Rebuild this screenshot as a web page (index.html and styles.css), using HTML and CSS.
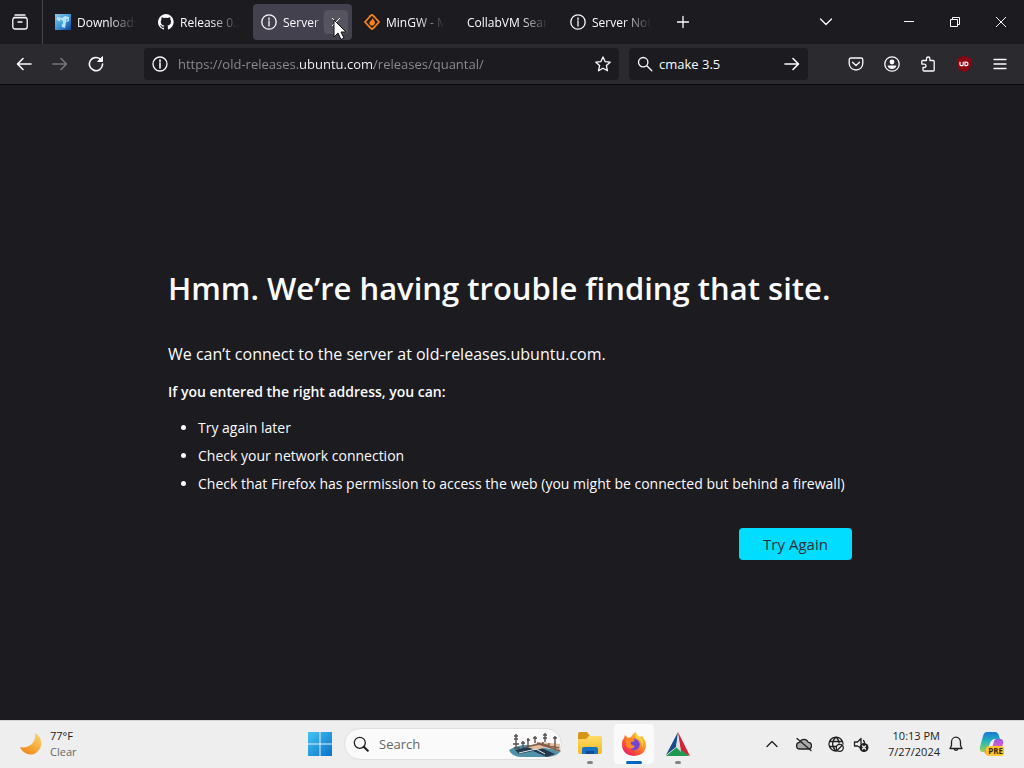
FILE: index.html
```html
<!DOCTYPE html>
<html lang="en">
<head>
<meta charset="utf-8">
<meta name="viewport" content="width=device-width, initial-scale=1">
<title>Server Not Found</title>
<link rel="stylesheet" href="styles.css">
</head>
<body>
<div class="desktop">
  <header class="browser">
    <div class="tabstrip">
      <button class="firefox-view" aria-label="Firefox View">
        <svg class="icon" viewBox="0 0 16 16"><path d="M3 1h10M2 3.5h12"/><rect x=".8" y="3.6" width="14.4" height="11.4" rx="2.2"/><path d="M6 8h4"/></svg>
      </button>
      <div class="tabs" role="tablist">
        <div class="tab" role="tab">
          <svg class="favicon" viewBox="0 0 16 16"><defs><linearGradient id="dl" x2="1" y2="1"><stop stop-color="#93c8e8"/><stop offset=".5" stop-color="#3d9bda"/><stop offset="1" stop-color="#123f9b"/></linearGradient></defs><path fill="url(#dl)" d="M0 0h16v16H0z"/><path fill="#b9e3f5" d="M2 3l5 1 3-2 4 1v4l-3 1-1 6-3-1-1-5-4-2z"/><path fill="#48a8de" d="M5 5l3 2v3l-2 1zM11 5l2 0-2 3z"/></svg>
          <span class="tab-label">Downloads</span>
        </div>
        <div class="tab" role="tab">
          <svg class="favicon" viewBox="0 0 16 16"><path fill="#fbfbfe" d="M8 0a8 8 0 0 0-2.500 15.600c.4.1.5-.2.5-.4v-1.500c-2 .4-2.600-.5-2.800-1-.1-.2-.5-.9-.8-1.100-.3-.2-.7-.6 0-.6.6 0 1.100.6 1.200.8.7 1.200 1.900.9 2.300.7.1-.5.3-.9.5-1.100-1.800-.2-3.600-.9-3.600-4 0-.9.3-1.600.8-2.100-.1-.2-.4-1 .1-2.100 0 0 .7-.2 2.200.8a7.500 7.500 0 0 1 4 0c1.500-1 2.200-.8 2.200-.8.4 1.100.2 1.900.1 2.100.5.6.8 1.300.8 2.100 0 3.100-1.900 3.800-3.700 4 .3.2.6.7.6 1.500v2.200c0 .2.1.5.5.4A8 8 0 0 0 8 0z"/></svg>
          <span class="tab-label">Release 0.2</span>
        </div>
        <div class="tab tab-active" role="tab" aria-selected="true">
          <svg class="favicon line" viewBox="0 0 16 16"><circle cx="8" cy="8" r="7.200"/><path d="M8 7v5M8 4v1.500"/></svg>
          <span class="tab-label">Server Not Found</span>
          <button class="tab-close" aria-label="Close tab"><svg viewBox="0 0 12 12"><path d="M2 2l8 8M10 2l-8 8"/></svg></button>
          <svg class="cursor" viewBox="0 0 14 22"><path fill="#fff" stroke="#111" stroke-width="1" d="M1 1v17l4-4 3 6.500 3-1.400L8 13h5z"/></svg>
        </div>
        <div class="tab" role="tab">
          <svg class="favicon" viewBox="0 0 16 16"><path fill="none" stroke="#f58220" stroke-width="1.800" d="M6.500 2L1 8l5.500 6M9.500 2L15 8l-5.500 6M5 2.800L8 .8l3 2.500M5 12.500l3 2.700 3-2.500"/><path fill="#f58220" d="M8.300 4c2.700 3 3 4.200 2.400 5.800-.6 1.600-2.200 2.200-3.300 1.800C5 10.800 5 8.600 6.200 7.300 7.600 5.900 8.300 5.500 8.300 4z"/></svg>
          <span class="tab-label">MinGW - Min</span>
        </div>
        <div class="tab" role="tab"><span class="tab-label">CollabVM Search</span></div>
        <div class="tab" role="tab">
          <svg class="favicon line" viewBox="0 0 16 16"><circle cx="8" cy="8" r="7.200"/><path d="M8 7v5M8 4v1.500"/></svg>
          <span class="tab-label">Server Not Found</span>
        </div>
      </div>
      <button class="tool" aria-label="New tab"><svg class="icon" viewBox="0 0 16 16"><path d="M8 2.500v11M2.500 8h11"/></svg></button>
      <button class="tool all-tabs" aria-label="List all tabs"><svg class="icon" viewBox="0 0 16 16"><path d="M2.500 5L8 10.500 13.500 5"/></svg></button>
      <div class="window-controls">
        <button aria-label="Minimize"><svg viewBox="0 0 12 12"><path d="M1 5.500h10"/></svg></button>
        <button aria-label="Restore"><svg viewBox="0 0 12 12"><path d="M1.500 3.500h7v7h-7zM3.500 3.500v-2h7v7h-2"/></svg></button>
        <button aria-label="Close"><svg viewBox="0 0 12 12"><path d="M1 1l10 10M11 1L1 11"/></svg></button>
      </div>
    </div>
    <nav class="navbar" aria-label="Navigation">
      <div class="nav-buttons">
        <button class="tool" aria-label="Back"><svg class="icon bold" viewBox="0 0 16 16"><path d="M15 8H1.500M7 2.500L1.500 8 7 13.500"/></svg></button>
        <button class="tool" aria-label="Forward" disabled><svg class="icon bold" viewBox="0 0 16 16"><path d="M1 8h13.500M9 2.500L14.500 8 9 13.500"/></svg></button>
        <button class="tool" aria-label="Reload"><svg class="icon bold" viewBox="0 0 16 16"><path d="M13.200 4A6.600 6.600 0 1 0 14.600 8"/><path d="M14.500 1v4.500H10z" fill="currentColor" stroke-width="1"/></svg></button>
      </div>
      <div class="field url">
        <svg class="icon" viewBox="0 0 16 16"><circle cx="8" cy="8" r="7"/><path d="M8 7v5M8 4v1.500" stroke-width="1.600"/></svg>
        <input class="url-input" type="text" aria-label="Address" value="https://old-releases.ubuntu.com/releases/quantal/">
        <button class="field-button" aria-label="Bookmark this page"><svg class="icon" viewBox="0 0 16 16"><path d="M8 .9l2.100 4.700 5.100.6-3.800 3.400 1.100 5.200L8 12.200l-4.500 2.600 1.100-5.200L.8 6.200l5.100-.6z"/></svg></button>
      </div>
      <div class="field search">
        <svg class="icon" viewBox="0 0 16 16"><circle cx="6.200" cy="6.200" r="4.700"/><path d="M9.800 9.800l5 5"/></svg>
        <input type="text" aria-label="Search" value="cmake 3.5">
        <button class="field-button" aria-label="Go"><svg class="icon bold" viewBox="0 0 16 16"><path d="M1 8h13.500M9 2.500L14.500 8 9 13.500"/></svg></button>
      </div>
      <div class="nav-buttons extras">
        <button class="tool" aria-label="Save to Pocket"><svg class="icon" viewBox="0 0 16 16"><path d="M3 2h10a1.800 1.800 0 0 1 1.800 1.800V7.500a6.800 6.500 0 0 1-13.600 0V3.800A1.800 1.800 0 0 1 3 2z"/><path d="M4.500 6.200L8 9.500l3.500-3.300"/></svg></button>
        <button class="tool" aria-label="Account"><svg class="icon" viewBox="0 0 16 16"><circle cx="8" cy="8" r="7.200"/><circle cx="8" cy="6" r="2.400" fill="currentColor" stroke="none"/><path d="M3.500 9.500h9a4.600 4.300 0 0 1-9 0z" fill="currentColor" stroke="none"/></svg></button>
        <button class="tool" aria-label="Extensions"><svg class="icon" viewBox="0 0 16 16"><path d="M6.500 4.500V2.700a1.700 1.700 0 0 1 3.400 0v1.800h3.300a1 1 0 0 1 1 1V14a1 1 0 0 1-1 1H4a1 1 0 0 1-1-1v-2.500h1.300a1.700 1.700 0 0 0 0-3.400H1.800V5.500a1 1 0 0 1 1-1z"/></svg></button>
        <button class="tool ublock" aria-label="uBlock Origin"><svg viewBox="0 0 16 16"><path fill="#8c0610" d="M8 0l7 2.500V8c0 4-3 6.500-7 8-4-1.500-7-4-7-8V2.500z"/><path fill="none" stroke="#fff" stroke-width="1.200" d="M4 5.800v2.600q0 1.200 1.200 1.200h1q1 0 1-1.200V5.800M9 6.200h1.200q1.800 0 1.800 1.700T10.200 9.600H9z"/></svg></button>
        <button class="tool" aria-label="Menu"><svg class="icon" viewBox="0 0 16 16"><path d="M2 3.500h12M2 8h12M2 12.500h12"/></svg></button>
      </div>
    </nav>
  </header>

  <main class="page">
    <div class="error">
      <h1>Hmm. We’re having trouble finding that site.</h1>
      <p class="lead">We can’t connect to the server at old-releases.ubuntu.com.</p>
      <p class="hint">If you entered the right address, you can:</p>
      <ul>
        <li>Try again later</li>
        <li>Check your network connection</li>
        <li>Check that Firefox has permission to access the web (you might be connected but behind a firewall)</li>
      </ul>
      <div class="actions"><button class="primary">Try Again</button></div>
    </div>
  </main>

  <footer class="taskbar">
    <button class="weather">
      <svg class="moon" viewBox="0 0 24 24"><defs><linearGradient id="mn" x1="1" x2=".3" y2="1"><stop stop-color="#ffd875"/><stop offset="1" stop-color="#ee8a18"/></linearGradient></defs><path fill="url(#mn)" d="M16 1c9 5 8 17-1 21C9 24 3 20 1 15c8 2 17-4 15-14z"/></svg>
      <span class="weather-text"><span>77°F</span><span class="muted">Clear</span></span>
    </button>
    <div class="apps">
      <button class="app" aria-label="Start"><svg class="app-icon" viewBox="0 0 24 24"><defs><linearGradient id="wn" x2="1" y2="1"><stop stop-color="#45c4f2"/><stop offset="1" stop-color="#0872c9"/></linearGradient></defs><path fill="url(#wn)" d="M0 0h11.500v11.500H0zM12.500 0H24v11.500H12.500zM0 12.500h11.500V24H0zM12.500 12.500H24V24H12.500z"/></svg></button>
      <div class="task-search">
        <svg class="icon" viewBox="0 0 16 16"><circle cx="6.800" cy="6.800" r="5.500"/><path d="M10.800 10.800l4 4" stroke-width="2"/></svg>
        <input type="search" aria-label="Search Windows" placeholder="Search">
        <svg class="scene" viewBox="0 0 52 26"><path fill="#4e91a8" d="M0 19q12-7 25-4 12 2 27 5-5 6-15 6H12Q3 26 0 19z"/><path fill="#24394d" d="M6 19l20-5 20 9-8 3-14-6-14 3z"/><path fill="#dfbd9e" d="M18 16l12-5 21 2v8l-12-5-12 3z"/><path fill="none" stroke="#815d4d" stroke-width="1.500" d="M17 16l13-3 21 7M28 12l22 5M34 11v4M40 12v5M46 13v6"/><path fill="none" stroke="#574d4e" stroke-width="1.400" d="M7 3v15M5 5h4M5 8h4M4 13h6M5 17h6M14 10v7M12 12h4M19 7v9M18 9h3M26 5v7M24 7h4M36 2v9M34 4h4M34 7h4M46 5v8M44 7h4"/><path fill="none" stroke="#e4edf0" d="M10 22l17-4 9 5"/></svg>
      </div>
      <button class="app" aria-label="File Explorer"><svg class="app-icon" viewBox="0 0 24 24"><defs><linearGradient id="fd" x2="0" y2="1"><stop stop-color="#ffdc68"/><stop offset="1" stop-color="#f6b91d"/></linearGradient></defs><path fill="#d79518" d="M0 2q0-2 2-2h7l3 4v5H0z"/><path fill="url(#fd)" d="M0 7h8l3-3h11q2 0 2 2v14q0 2-2 2H2q-2 0-2-2z"/><path fill="#1672c3" d="M4 22v-5q0-2 2-2h12q2 0 2 2v5z"/><path fill="#0d4e91" d="M8 19h8v3H8z"/></svg><span class="indicator"></span></button>
      <button class="app app-active" aria-label="Firefox"><svg class="app-icon" viewBox="0 0 24 24"><defs><linearGradient id="ff" x1="1" x2=".2" y2="1"><stop stop-color="#ffe34a"/><stop offset=".4" stop-color="#ff9b25"/><stop offset=".75" stop-color="#ff4839"/><stop offset="1" stop-color="#e31b6d"/></linearGradient></defs><path fill="url(#ff)" d="M2 6l1-3 3 3 3-1q2-4 5-5 0 3 4 5l2-1q4 5 4 9 0 10-12 11Q0 23 0 12q0-4 2-6z"/><circle cx="12" cy="12.500" r="5.700" fill="#7245d9"/><path fill="#ff8a24" d="M5 6q5-1 8 3l-4 1q-1 2 1 3l3 1q-3 5-8 1-3-5 0-9z"/><path fill="#ffd43c" d="M14 0q0 3 4 5 5 5 2 11 1-6-4-9-4-3-2-7z"/></svg><span class="indicator current"></span></button>
      <button class="app" aria-label="CMake"><svg class="app-icon" viewBox="0 0 24 24"><path fill="#174b8d" d="M12 0L0 23l10-8z"/><path fill="#ce2537" d="M12 0l12 24-9-4z"/><path fill="#1e9853" d="M0 24l11-9 12 9z"/><path fill="#d7dedf" d="M12 4l3 16-5-5z"/></svg><span class="indicator"></span></button>
    </div>
    <div class="tray">
      <button class="tray-button" aria-label="Show hidden icons"><svg class="icon" viewBox="0 0 16 16"><path d="M3 10.500L8 5.500l5 5"/></svg></button>
      <button class="tray-button" aria-label="OneDrive"><svg class="icon" viewBox="0 0 16 16"><path fill="#aaa" d="M4 13a3.300 3.300 0 0 1-.2-6.600 4.400 4.400 0 0 1 8.400 0A3.300 3.300 0 0 1 12 13z"/><path d="M1 2.500l14 12"/></svg></button>
      <button class="tray-button system" aria-label="Network and volume">
        <svg class="icon" viewBox="0 0 16 16"><path d="M9 15A7 7 0 1 1 15 8M8 1C3.500 5 3.500 11 8 15M8 1c2 2 3 4 3 6M1.500 5.500h13M1.500 10.500H8"/><circle cx="11.800" cy="11.800" r="3.500"/><path d="M9.500 14l4.500-4.500"/></svg>
        <svg class="icon" viewBox="0 0 16 16"><path d="M8 12L4.500 10H1.500V6h3L8 2.500v5M10.500 4.500q1 1 1 2.500"/><circle cx="11" cy="11.500" r="4.500" fill="currentColor" stroke="none"/><path stroke="#fff" d="M9.500 10l3 3M12.500 10l-3 3"/></svg>
      </button>
      <button class="clock"><time>10:13 PM</time><time>7/27/2024</time></button>
      <button class="tray-button" aria-label="Notifications"><svg class="icon" viewBox="0 0 16 16"><path d="M2 12.500h12l-1.500-3V6a4.500 4.800 0 0 0-9 0v3.500zM6.200 13a1.900 1.900 0 0 0 3.600 0"/></svg></button>
      <button class="copilot" aria-label="Copilot preview"><svg viewBox="0 0 26 26"><defs><linearGradient id="ca" x2="0" y2="1"><stop stop-color="#1679d9"/><stop offset=".5" stop-color="#29b9b5"/><stop offset="1" stop-color="#9ed34c"/></linearGradient><linearGradient id="cb" x2="0" y2="1"><stop stop-color="#9456e8"/><stop offset=".55" stop-color="#ea63ba"/><stop offset="1" stop-color="#ffb139"/></linearGradient></defs><path fill="url(#ca)" d="M8 1h8q3 0 4 4l1 3h-5q-3 0-4 3l-2 7q-1 3-4 3H4q-4 0-3-5L4 5q1-4 4-4z"/><path fill="url(#cb)" d="M17 8h4q4 0 3 5l-3 8q-1 3-4 3H9q-3 0-4-4h4q3 0 4-3l2-7q1-2 2-2z"/><path fill="#e9f2f8" d="M12 10h3l-3 7H9z"/><rect x="7" y="15" width="18" height="10" rx="3" fill="#ffc52f"/></svg><span class="badge">PRE</span></button>
    </div>
  </footer>
</div>
</body>
</html>
```
FILE: styles.css
```css
* {
  box-sizing: border-box;
}

body {
  margin: 0;
  background: #1c1b20;
  color: #fbfbfe;
  font-family: "Open Sans", "Noto Sans", sans-serif;
  font-size: 12px;
}

button,
input {
  border: 0;
  padding: 0;
  background: none;
  color: inherit;
  font: inherit;
}

button {
  display: flex;
  align-items: center;
  justify-content: center;
  flex: none;
}

input {
  min-width: 0;
  outline: 0;
}

svg {
  display: block;
  flex: none;
}

.desktop {
  display: flex;
  flex-direction: column;
  min-height: 100vh;
}

.icon,
.line {
  width: 16px;
  height: 16px;
  fill: none;
  stroke: currentColor;
  stroke-width: 1.3;
  stroke-linecap: round;
  stroke-linejoin: round;
}

.bold {
  stroke-width: 1.6;
}

/* Tab strip */
.tabstrip {
  display: flex;
  align-items: center;
  height: 44px;
}

.firefox-view {
  width: 43px;
  height: 44px;
  border-right: 1px solid #46454c;
  padding-right: 3px;
}

.tabs {
  display: flex;
  gap: 4px;
  flex: 0 1 614px;
  min-width: 0;
  margin: 0 4px;
}

.tab {
  position: relative;
  display: flex;
  align-items: center;
  flex: 1 1 0;
  gap: 6px;
  min-width: 0;
  height: 36px;
  padding: 0 8px;
  border-radius: 4px;
}

.tab-active {
  background: #42414d;
}

.favicon {
  width: 16px;
  height: 16px;
}

.tab-label {
  flex: 1;
  min-width: 0;
  overflow: hidden;
  white-space: nowrap;
  mask-image: linear-gradient(to left, transparent 2px, #000 30px);
}

.tab-active .tab-label {
  mask-image: linear-gradient(to left, transparent, #000 10px);
}

.tab-close {
  width: 24px;
  height: 24px;
  margin: 0 -4px 0 -6px;
  border-radius: 4px;
  background: #55545f;
}

.tab-close svg,
.window-controls svg {
  width: 12px;
  height: 12px;
  fill: none;
  stroke: currentColor;
}

.cursor {
  position: absolute;
  top: 15px;
  right: 5px;
  width: 14px;
  height: 22px;
}

.tool {
  width: 36px;
  height: 36px;
}

.tool:disabled {
  color: #77767c;
}

.all-tabs {
  margin-left: auto;
}

.window-controls {
  display: flex;
  margin-left: 42px;
}

.window-controls button {
  width: 46px;
  height: 44px;
}

/* Navigation bar */
.navbar {
  display: flex;
  align-items: center;
  height: 41px;
  padding: 0 6px;
  border-bottom: 1px solid #0c0c0f;
  background: #2b2a2f;
}

.nav-buttons {
  display: flex;
}

.field {
  display: flex;
  align-items: center;
  gap: 6px;
  min-width: 0;
  height: 32px;
  padding: 0 8px;
  border-radius: 4px;
  background: #1c1b20;
  font-size: 13px;
}

.field input {
  flex: 1;
}

.url {
  flex: 459 1 0;
  gap: 10px;
  margin-left: 30px;
}

.url-input {
  background: linear-gradient(to right, #8f8e94 121px, #fbfbfe 121px, #fbfbfe 196px, #8f8e94 196px);
  background-clip: text;
  -webkit-text-fill-color: transparent;
}

.search {
  flex: 163 1 0;
  margin-left: 10px;
}

.extras {
  margin-left: 30px;
}

.ublock svg {
  width: 16px;
  height: 16px;
}

/* Error page */
.page {
  display: flex;
  flex: 1;
  align-items: center;
  justify-content: center;
  padding: 48px 24px 24px;
}

.error {
  width: 100%;
  max-width: 688px;
  padding-bottom: 4px;
  font-size: 14px;
  line-height: 20px;
}

h1 {
  margin: 0 0 32px;
  font-size: 31px;
  font-weight: 600;
  line-height: 44px;
}

.lead {
  margin: 0 0 16px;
  font-size: 16px;
  line-height: 24px;
}

.hint {
  margin: 0 0 16px;
  font-weight: 600;
}

ul {
  display: flex;
  flex-direction: column;
  gap: 8px;
  margin: 0;
  padding-left: 30px;
}

.actions {
  display: flex;
  justify-content: flex-end;
  margin: 34px 4px 0;
}

.primary {
  min-width: 113px;
  height: 32px;
  border-radius: 4px;
  background: #00ddff;
  color: #2b2a33;
  font-size: 15px;
}

/* Taskbar */
.taskbar {
  display: grid;
  grid-template-columns: 1fr auto 1fr;
  align-items: center;
  height: 48px;
  padding-bottom: 1px;
  border-top: 1px solid #d4d4d4;
  background: #eeeeee;
  color: #202020;
}

.taskbar button,
.weather-text {
  font-size: 11px;
  line-height: 16px;
}

.weather {
  justify-self: start;
  gap: 7px;
  padding-left: 19px;
}

.moon {
  width: 24px;
  height: 24px;
}

.weather-text {
  display: flex;
  flex-direction: column;
  text-align: left;
}

.muted {
  color: #666;
}

.apps {
  display: flex;
  align-items: center;
  gap: 4px;
  margin-right: 26px;
}

.app {
  position: relative;
  width: 40px;
  height: 40px;
  border-radius: 4px;
}

.app-active {
  background: #fafafa;
}

.app-icon {
  width: 24px;
  height: 24px;
}

.indicator {
  position: absolute;
  bottom: 0;
  width: 6px;
  height: 3px;
  border-radius: 2px;
  background: #858585;
}

.current {
  width: 16px;
  background: #0067c0;
}

.task-search {
  display: flex;
  align-items: center;
  gap: 10px;
  width: 218px;
  height: 32px;
  margin-right: 4px;
  padding-left: 8px;
  border: 1px solid #dedede;
  border-radius: 16px;
  background: #fafafa;
  font-size: 13px;
}

.task-search input {
  flex: 1;
}

.task-search input::placeholder {
  color: #666;
}

.scene {
  width: 52px;
  height: 26px;
}

.tray {
  display: flex;
  align-items: center;
  justify-self: end;
  padding-right: 19px;
}

.tray-button {
  width: 32px;
  height: 40px;
}

.system {
  gap: 9px;
  width: 56px;
}

.clock {
  flex-direction: column;
  align-items: flex-end;
  width: 64px;
}

.copilot {
  position: relative;
  margin-left: 7px;
}

.copilot svg {
  width: 26px;
  height: 26px;
}

.taskbar .badge {
  position: absolute;
  right: 2px;
  bottom: 1px;
  color: #3a2600;
  font-size: 8px;
  font-weight: 700;
  line-height: 10px;
}
```
